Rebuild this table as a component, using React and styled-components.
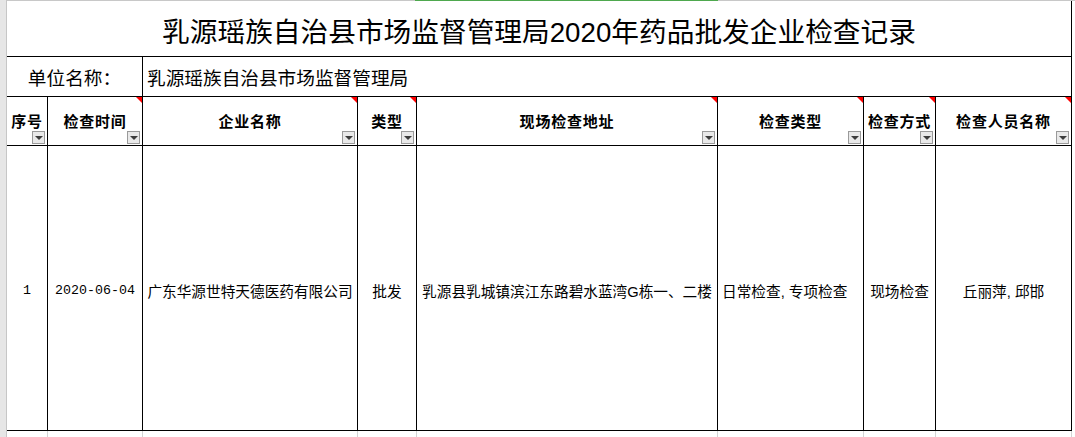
import React from "react";
import styled, { createGlobalStyle } from "styled-components";

const GlobalStyle = createGlobalStyle`
    html, body {
        margin: 0;
        padding: 0;
        background: #fff;
        font-family: "Liberation Sans", "Noto Sans CJK SC", sans-serif;
        color: #000;
    }
`

const COLS = "41px 95px 215px 59px 301px 146px 72px 136px 1fr";

const Sheet = styled.div`
    display: flex;
    width: 1075px;
    height: 437px;
    overflow: hidden;
`

const Gutter = styled.div`
    width: 6px;
    flex: none;
    background: #e6e6e6;
    border-right: 1px solid #c6c6c6;
`

const Main = styled.div`
    flex: 1;
    display: flex;
    flex-direction: column;
`

const TopStrip = styled.div`
    display: grid;
    grid-template-columns: ${COLS};
    height: 2px;
    background: #c8c8c8;
`

const Tick = styled.div`
    background: ${p => p.$active ? "#4ea84e" : "transparent"};
    margin-left: ${p => p.$active ? "-2px" : "0"};
`

const Grid = styled.div`
    display: grid;
    grid-template-columns: ${COLS};
    grid-template-rows: 56px 40px 49px 285px 6px;
`

const Cell = styled.div`
    box-sizing: border-box;
    position: relative;
    display: flex;
    align-items: center;
    justify-content: ${p => p.$align === "left" ? "flex-start" : "center"};
    padding: ${p => p.$align === "left" ? "0 0 0 4px" : "0"};
    border-right: 1px solid #000;
    border-bottom: 1px solid #000;
    white-space: nowrap;
    min-width: 0;
`

const TitleCell = styled(Cell)`
    grid-column: 1 / 9;
    font-size: 27.7px;
    padding-top: 2px;
`

const UnitLabel = styled(Cell)`
    grid-column: 1 / 3;
    font-size: 18.67px;
`

const UnitValue = styled(Cell)`
    grid-column: 3 / 9;
    font-size: 18.67px;
`

const HeadCell = styled(Cell)`
    font-size: 15px;
    font-weight: 700;
    letter-spacing: 0.8px;
    padding-bottom: 2px;
`

const DataCell = styled(Cell)`
    font-size: 14.67px;
    font-family: ${p => p.$mono ? '"Liberation Mono", monospace' : '"Liberation Sans", "Noto Sans CJK SC", sans-serif'};
    ${p => p.$mono ? "font-size: 13.3px;" : ""}
    padding-top: 4px;
`

const Blank = styled.div``

const GridTail = styled.div`
    box-sizing: border-box;
    border-right: 1px solid #d4d4d4;
`

const Comment = styled.span`
    position: absolute;
    top: 0;
    right: 0;
    width: 0;
    height: 0;
    border-top: 6px solid #ff0000;
    border-left: 6px solid transparent;
`

const FilterButton = styled.span`
    position: absolute;
    right: 2px;
    bottom: 1px;
    width: 13px;
    height: 13px;
    box-sizing: border-box;
    border: 1px solid #9a9a9a;
    background: #e9e9e9;
    display: flex;
    align-items: center;
    justify-content: center;
`

const Arrow = styled.span`
    width: 0;
    height: 0;
    margin-top: 1px;
    border-left: 4px solid transparent;
    border-right: 4px solid transparent;
    border-top: 4px solid #3c3c3c;
`

const headers = [
    { label: "序号", comment: false },
    { label: "检查时间", comment: true },
    { label: "企业名称", comment: true },
    { label: "类型", comment: true },
    { label: "现场检查地址", comment: true },
    { label: "检查类型", comment: true },
    { label: "检查方式", comment: true },
    { label: "检查人员名称", comment: true },
];

const row = [
    { value: "1", mono: true },
    { value: "2020-06-04", mono: true },
    { value: "广东华源世特天德医药有限公司" },
    { value: "批发" },
    { value: "乳源县乳城镇滨江东路碧水蓝湾G栋一、二楼" },
    { value: "日常检查, 专项检查", align: "left" },
    { value: "现场检查" },
    { value: "丘丽萍, 邱邯" },
];

const App = () => {
    return (<Sheet>
        <GlobalStyle />
        <Gutter />
        <Main>
            <TopStrip>
                {headers.map((h, i) => <Tick key={i} $active={i === 4} />)}
                <Tick />
            </TopStrip>
            <Grid>
                <TitleCell>乳源瑶族自治县市场监督管理局2020年药品批发企业检查记录</TitleCell>
                <Blank />

                <UnitLabel>单位名称：</UnitLabel>
                <UnitValue $align="left">乳源瑶族自治县市场监督管理局</UnitValue>
                <Blank />

                {headers.map((h) => (
                    <HeadCell key={h.label}>
                        {h.label}
                        {h.comment && <Comment />}
                        <FilterButton><Arrow /></FilterButton>
                    </HeadCell>
                ))}
                <Blank />

                {row.map((c, i) => (
                    <DataCell key={i} $mono={c.mono} $align={c.align}>{c.value}</DataCell>
                ))}
                <Blank />

                {headers.map((h) => <GridTail key={h.label} />)}
                <Blank />
            </Grid>
        </Main>
    </Sheet>)
}

export default App;
